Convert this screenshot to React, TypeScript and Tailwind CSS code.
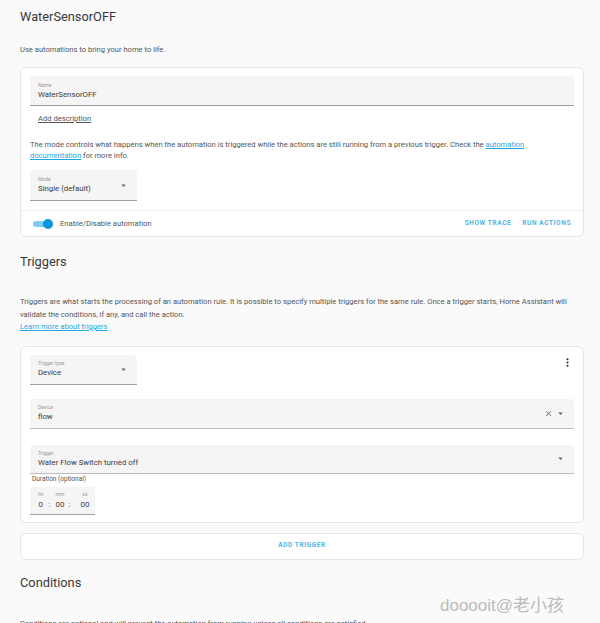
const MenuDown = ({ className = "" }: { className?: string }) => (
  <svg viewBox="0 0 24 24" className={className} fill="currentColor">
    <path d="M7 10l5 5 5-5z" />
  </svg>
);

function FilledField({
  label,
  value,
  className = "",
  children,
}: {
  label: string;
  value: string;
  className?: string;
  children?: React.ReactNode;
}) {
  return (
    <div
      className={`flex items-center rounded-t-[4px] border-b border-[#9e9e9e] bg-[#f5f5f5] pl-[8px] pr-[8px] ${className}`}
    >
      <div className="flex-1">
        <div className="text-[5px] leading-[6px] text-[#9a9a9a]">{label}</div>
        <div className="mt-[2px] text-[7.8px] leading-[10px] text-[#3a3a3a]">{value}</div>
      </div>
      {children}
    </div>
  );
}

export default function App() {
  return (
    <div className="relative h-[623px] overflow-hidden bg-[#fafafa] pl-5 pr-4 font-['Roboto',sans-serif] text-[#212121]">
      <h1 className="pt-[7px] text-[12.8px] leading-[20px] font-normal text-[#383838]">
        WaterSensorOFF
      </h1>
      <p className="mt-[17px] text-[7.6px] leading-[12px] text-[#555]">
        Use automations to bring your home to life.
      </p>

      <div className="mt-[11px] rounded-[6px] border border-[#e6e6e6] bg-white">
        <div className="px-[9px] pt-[8px] pb-[9px]">
          <FilledField label="Name" value="WaterSensorOFF" className="h-[30px]" />
          <div className="mt-[8px] ml-[8px] text-[7.6px] leading-[10px] text-[#555] underline">
            Add description
          </div>
          <p className="mt-[15px] text-[7.6px] leading-[11px] text-[#555]">
            The mode controls what happens when the automation is triggered while the actions are
            still running from a previous trigger. Check the{" "}
            <span className="text-[#1ea7e4] underline">automation documentation</span> for more
            info.
          </p>
          <FilledField label="Mode" value="Single (default)" className="mt-[9px] h-[31px] w-[107px]">
            <MenuDown className="h-[11px] w-[11px] text-[#666]" />
          </FilledField>
        </div>
        <div className="flex h-[26px] items-center border-t border-[#efefef] pr-[12px] pl-[12px]">
          <div className="relative h-[10px] w-[20px]">
            <div className="absolute top-[2px] left-0 h-[6px] w-[17px] rounded-full bg-[#7fcbf3]" />
            <div className="absolute top-0 right-0 h-[10px] w-[10px] rounded-full bg-[#0a97dd]" />
          </div>
          <span className="ml-[7px] text-[7.6px] text-[#555]">Enable/Disable automation</span>
          <div className="ml-auto flex gap-[11px] text-[6.5px] font-bold tracking-[0.6px] text-[#4fb6e3]">
            <span>SHOW TRACE</span>
            <span>RUN ACTIONS</span>
          </div>
        </div>
      </div>

      <h2 className="mt-[16px] text-[12.8px] leading-[18px] font-normal text-[#383838]">Triggers</h2>
      <p className="mt-[25px] text-[7.6px] leading-[12.5px] text-[#555]">
        Triggers are what starts the processing of an automation rule. It is possible to specify
        multiple triggers for the same rule. Once a trigger starts, Home Assistant will validate the
        conditions, if any, and call the action.
        <br />
        <span className="text-[#1ea7e4] underline">Learn more about triggers</span>
      </p>

      <div className="mt-[12px] rounded-[6px] border border-[#e6e6e6] bg-white px-[9px] pt-[8px] pb-[7px]">
        <div className="flex items-start justify-between">
          <FilledField label="Trigger type" value="Device" className="h-[30px] w-[107px]">
            <MenuDown className="h-[11px] w-[11px] text-[#666]" />
          </FilledField>
          <svg viewBox="0 0 24 24" className="mt-[1px] h-[13px] w-[13px] text-[#333]" fill="currentColor">
            <path d="M12 16a2 2 0 1 1 0 4 2 2 0 0 1 0-4m0-6a2 2 0 1 1 0 4 2 2 0 0 1 0-4m0-6a2 2 0 1 1 0 4 2 2 0 0 1 0-4z" />
          </svg>
        </div>
        <FilledField label="Device" value="flow" className="mt-[14px] h-[30px] border-[#bdbdbd]">
          <svg viewBox="0 0 24 24" className="mr-[2px] h-[9px] w-[9px] text-[#777]" fill="currentColor">
            <path d="M19 6.41 17.59 5 12 10.59 6.41 5 5 6.41 10.59 12 5 17.59 6.41 19 12 13.41 17.59 19 19 17.59 13.41 12z" />
          </svg>
          <MenuDown className="h-[11px] w-[11px] text-[#666]" />
        </FilledField>
        <FilledField
          label="Trigger"
          value="Water Flow Switch turned off"
          className="mt-[16px] h-[29px] border-[#bdbdbd]"
        >
          <MenuDown className="h-[11px] w-[11px] text-[#666]" />
        </FilledField>
        <div className="mt-[1px] ml-[2px] text-[6.5px] leading-[9px] text-[#555]">Duration (optional)</div>
        <div className="mt-[3px] flex h-[28px] w-[65px] items-start rounded-t-[4px] border-b border-[#9e9e9e] bg-[#f5f5f5] pt-[4px] pl-[8px] text-[#444]">
          <div className="flex flex-col items-center">
            <span className="text-[5px] leading-[6px] text-[#999]">hh</span>
            <span className="mt-[3px] text-[8px] leading-[10px]">0</span>
          </div>
          <span className="mt-[9px] px-[5px] text-[8px] leading-[10px]">:</span>
          <div className="flex flex-col items-center">
            <span className="text-[5px] leading-[6px] text-[#999]">mm</span>
            <span className="mt-[3px] text-[8px] leading-[10px]">00</span>
          </div>
          <span className="mt-[9px] px-[4px] text-[8px] leading-[10px]">:</span>
          <div className="ml-[6px] flex flex-col items-center">
            <span className="text-[5px] leading-[6px] text-[#999]">ss</span>
            <span className="mt-[3px] text-[8px] leading-[10px]">00</span>
          </div>
        </div>
      </div>

      <div className="mt-[10px] flex h-[27px] items-center justify-center rounded-[6px] border border-[#e6e6e6] bg-white text-[6.5px] font-bold tracking-[0.6px] text-[#4fb6e3]">
        ADD TRIGGER
      </div>

      <h2 className="mt-[14px] text-[12.8px] leading-[18px] font-normal text-[#383838]">Conditions</h2>
      <p className="mt-[26px] text-[7.6px] leading-[12px] text-[#555]">
        Conditions are optional and will prevent the automation from running unless all conditions
        are satisfied.
      </p>

      <div className="absolute top-[593px] left-[440px] font-['Liberation_Sans','Noto_Sans_CJK_SC',sans-serif] text-[17px] text-[#bcbcbc]">
        dooooit@老小孩
      </div>
    </div>
  );
}
